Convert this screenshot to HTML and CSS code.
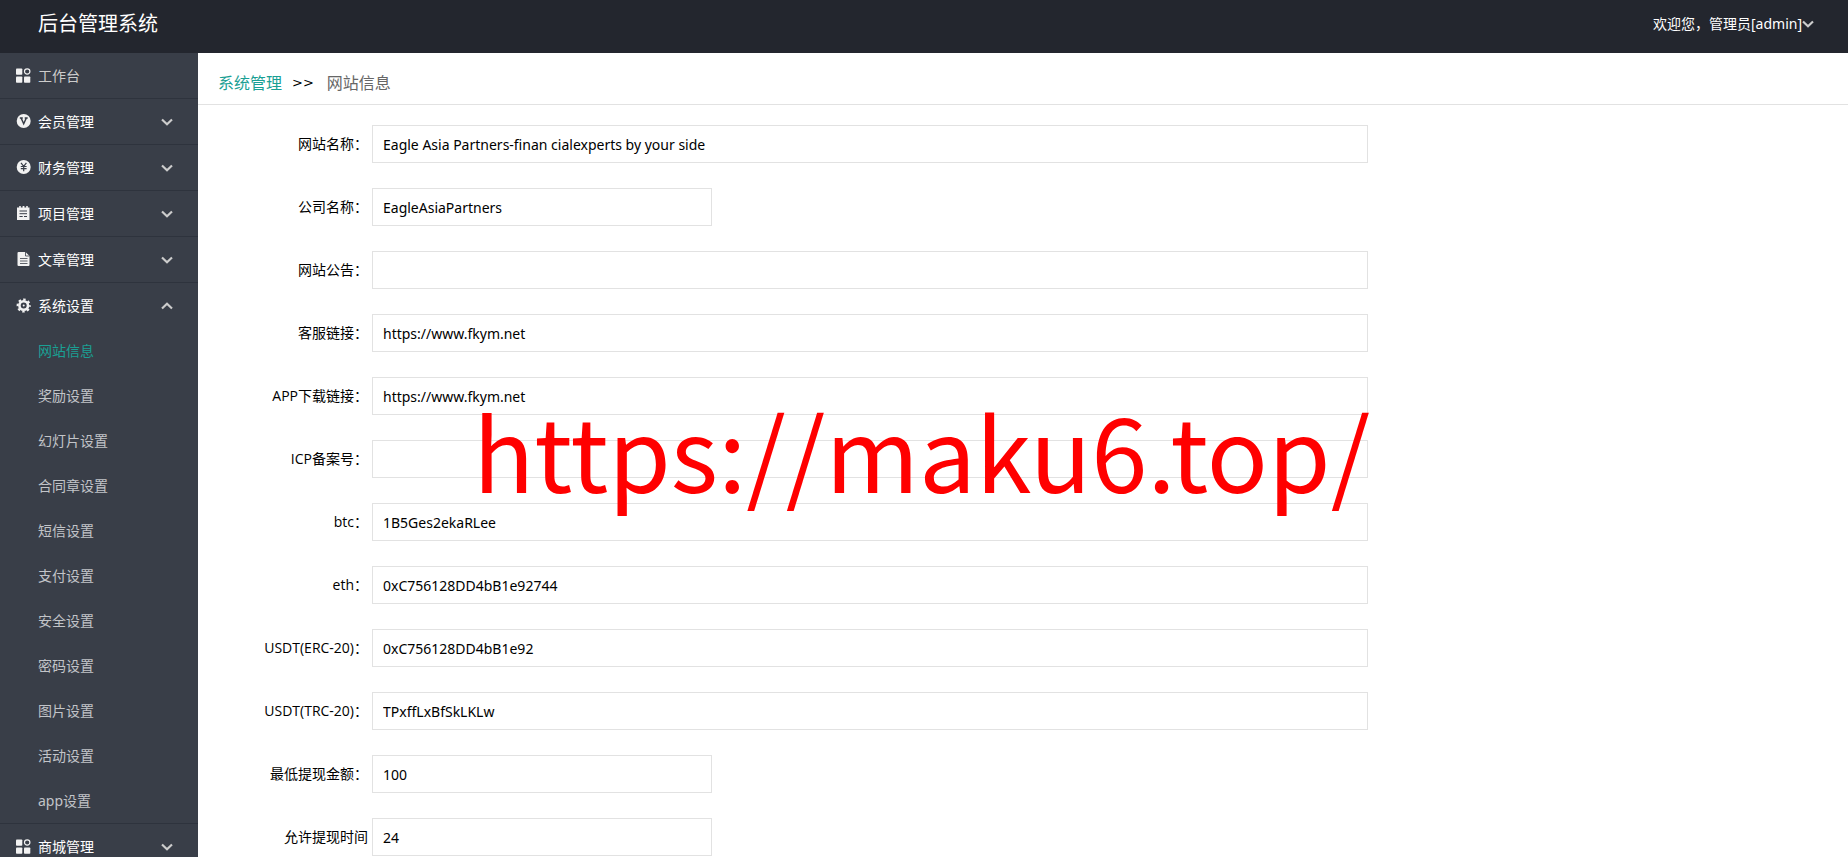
FILE: index.html
```html
<!DOCTYPE html>
<html lang="zh-CN">
<head>
<meta charset="utf-8">
<title>后台管理系统</title>
<link rel="stylesheet" href="styles.css">
</head>
<body>
<svg class="sprite" aria-hidden="true">
  <symbol id="i-grid" viewBox="0 0 15 15"><rect x="0" y="0.500" width="6.300" height="6.300" rx=".8" fill="currentColor"/><rect x="0" y="8.500" width="6.300" height="6.300" rx=".8" fill="currentColor"/><rect x="8" y="8.500" width="6.300" height="6.300" rx=".8" fill="currentColor"/><circle cx="11.200" cy="3.500" r="2.700" fill="none" stroke="currentColor" stroke-width="1.200"/></symbol>
  <symbol id="i-member" viewBox="0 0 15 15"><circle cx="7.700" cy="7" r="7" fill="currentColor"/><path d="M3.800 4.100h3M8.700 4.100h3M5.200 4.300l2.500 5.500 2.500-5.500" fill="none" stroke="#393e48" stroke-width="1.500"/></symbol>
  <symbol id="i-money" viewBox="0 0 15 15"><circle cx="7.700" cy="7" r="7" fill="currentColor"/><path d="M5 2.800l2.700 3.500 2.700-3.500M4.800 6.500h5.800M4.800 8.700h5.800M7.700 6.300v5" fill="none" stroke="#393e48" stroke-width="1.200"/></symbol>
  <symbol id="i-project" viewBox="0 0 15 15"><path d="M1 1.500h2.200V0h1.600v1.500h1.800V0h1.800v1.500h1.800V0h1.600v1.500H13.500V14H1z" fill="currentColor"/><path d="M3.500 5h7.500M3.500 7.700h7.500M3.500 10.500h3.200M8 10.500h3" stroke="#393e48"/></symbol>
  <symbol id="i-article" viewBox="0 0 15 15"><path d="M1.500 1q0-1 1-1h7l4 4v9q0 1-1 1h-10q-1 0-1-1z" fill="currentColor"/><path d="M9.500 0v4h4M4 6.500h7.500M4 9h7.500M4 11.500h7.500" fill="none" stroke="#393e48" stroke-width=".8"/></symbol>
  <symbol id="i-gear" viewBox="0 0 15 15"><g fill="none" stroke="currentColor"><circle cx="7.700" cy="7.500" r="4.300" stroke-width="2.600"/><circle cx="7.700" cy="7.500" r="6.100" stroke-width="2" stroke-dasharray="2.500 2.290" stroke-dashoffset="1.250"/></g><circle cx="7.700" cy="7.500" r="1" fill="currentColor"/></symbol>
  <symbol id="i-down" viewBox="0 0 12 8"><path d="M1 1.500l5 4.700 5-4.700" fill="none" stroke="currentColor" stroke-width="2.200"/></symbol>
  <symbol id="i-up" viewBox="0 0 12 8"><path d="M1 6.500l5-4.700 5 4.700" fill="none" stroke="currentColor" stroke-width="2.200"/></symbol>
</svg>
<header class="header">
  <h1 class="brand">后台管理系统</h1>
  <button class="user" type="button">欢迎您，管理员[admin]<svg class="chev"><use href="#i-down"/></svg></button>
</header>
<div class="layout">
  <nav class="sidebar">
    <a class="item plain" href="#"><svg class="icon"><use href="#i-grid"/></svg>工作台</a>
    <button class="item" type="button"><svg class="icon"><use href="#i-member"/></svg>会员管理<svg class="chev"><use href="#i-down"/></svg></button>
    <button class="item" type="button"><svg class="icon"><use href="#i-money"/></svg>财务管理<svg class="chev"><use href="#i-down"/></svg></button>
    <button class="item" type="button"><svg class="icon"><use href="#i-project"/></svg>项目管理<svg class="chev"><use href="#i-down"/></svg></button>
    <button class="item" type="button"><svg class="icon"><use href="#i-article"/></svg>文章管理<svg class="chev"><use href="#i-down"/></svg></button>
    <button class="item open" type="button"><svg class="icon"><use href="#i-gear"/></svg>系统设置<svg class="chev"><use href="#i-up"/></svg></button>
    <div class="submenu">
      <a class="active" href="#">网站信息</a>
      <a href="#">奖励设置</a>
      <a href="#">幻灯片设置</a>
      <a href="#">合同章设置</a>
      <a href="#">短信设置</a>
      <a href="#">支付设置</a>
      <a href="#">安全设置</a>
      <a href="#">密码设置</a>
      <a href="#">图片设置</a>
      <a href="#">活动设置</a>
      <a href="#">app设置</a>
    </div>
    <button class="item" type="button"><svg class="icon"><use href="#i-grid"/></svg>商城管理<svg class="chev"><use href="#i-down"/></svg></button>
  </nav>
  <main class="main">
    <div class="crumbs"><a href="#">系统管理</a><span class="sep">&gt;&gt;</span><span>网站信息</span></div>
    <form class="form">
      <div class="row"><label for="f1">网站名称：</label><input id="f1" type="text" value="Eagle Asia Partners-finan cialexperts by your side"></div>
      <div class="row"><label for="f2">公司名称：</label><input id="f2" class="short" type="text" value="EagleAsiaPartners"></div>
      <div class="row"><label for="f3">网站公告：</label><input id="f3" type="text" value=""></div>
      <div class="row"><label for="f4">客服链接：</label><input id="f4" type="text" value="https://www.fkym.net"></div>
      <div class="row"><label for="f5">APP下载链接：</label><input id="f5" type="text" value="https://www.fkym.net"></div>
      <div class="row"><label for="f6">ICP备案号：</label><input id="f6" type="text" value=""></div>
      <div class="row"><label for="f7">btc：</label><input id="f7" type="text" value="1B5Ges2ekaRLee"></div>
      <div class="row"><label for="f8">eth：</label><input id="f8" type="text" value="0xC756128DD4bB1e92744"></div>
      <div class="row"><label for="f9">USDT(ERC-20)：</label><input id="f9" type="text" value="0xC756128DD4bB1e92"></div>
      <div class="row"><label for="f10">USDT(TRC-20)：</label><input id="f10" type="text" value="TPxffLxBfSkLKLw"></div>
      <div class="row"><label for="f11">最低提现金额：</label><input id="f11" class="short" type="text" value="100"></div>
      <div class="row"><label for="f12">允许提现时间</label><input id="f12" class="short" type="text" value="24"></div>
    </form>
  </main>
</div>
<div class="watermark">https://maku6.top/</div>
</body>
</html>
```

FILE: styles.css
```css
* { box-sizing: border-box; }
body {
  margin: 0;
  height: 100vh;
  display: flex;
  flex-direction: column;
  overflow: hidden;
  font: 14px/20px "Noto Sans", "Noto Sans CJK SC", sans-serif;
  color: #000;
  background: #fff;
}
a { color: inherit; text-decoration: none; }
button, input { font: inherit; color: inherit; }
button { border: 0; background: none; cursor: pointer; }
.sprite { display: none; }

.header {
  flex: none;
  display: flex;
  justify-content: space-between;
  align-items: center;
  height: 53px;
  padding: 0 34px 6px 38px;
  background: #23262e;
  color: #fff;
}
.brand { margin: 0; font-size: 20px; font-weight: 400; line-height: 28px; }
.user { display: flex; align-items: center; padding: 0; }
.chev { width: 12px; height: 8px; color: #ccc; }

.layout { flex: 1; min-height: 0; display: flex; }
.sidebar {
  flex: none;
  width: 198px;
  overflow: hidden;
  background: #393e48;
}
.item {
  display: flex;
  align-items: center;
  width: 100%;
  height: 46px;
  padding: 0 25px 0 16px;
  border-bottom: 1px solid #2e333d;
  color: #fff;
}
.item.plain { color: #ccc; }
.item.open { height: 45px; border-bottom: 0; }
.item .icon { width: 15px; height: 15px; margin-right: 7px; color: #f2f2f2; }
.item .chev { margin-left: auto; }
.submenu { border-bottom: 1px solid #2e333d; color: #c2c4c8; }
.submenu a { display: block; padding-left: 38px; line-height: 45px; }
.submenu .active { color: #1aa094; }

.main { flex: 1; min-width: 0; }
.crumbs {
  display: flex;
  align-items: center;
  height: 52px;
  padding: 8px 0 0 20px;
  border-bottom: 1px solid #e2e2e2;
  font-size: 16px;
  color: #666;
}
.crumbs a { color: #1aa094; }
.sep { margin: 0 13px 0 10px; font-family: "DejaVu Sans", sans-serif; font-size: 13px; color: #000; }
.form { display: flex; flex-direction: column; gap: 25px; padding-top: 20px; }
.row { display: flex; align-items: center; gap: 4px; }
.row label {
  width: 170px;
  text-align: right;
  font-family: "Open Sans", "Noto Sans CJK SC", sans-serif;
}
.row input {
  width: calc(60% + 6px);
  height: 38px;
  padding: 0 10px;
  border: 1px solid #e2e2e2;
  background: #fff;
}
.row .short { width: 340px; }

.watermark {
  position: absolute;
  top: 379px;
  left: 473px;
  font: 101px/140px "Noto Sans CJK SC", sans-serif;
  color: #f00;
  white-space: nowrap;
  pointer-events: none;
}
```
